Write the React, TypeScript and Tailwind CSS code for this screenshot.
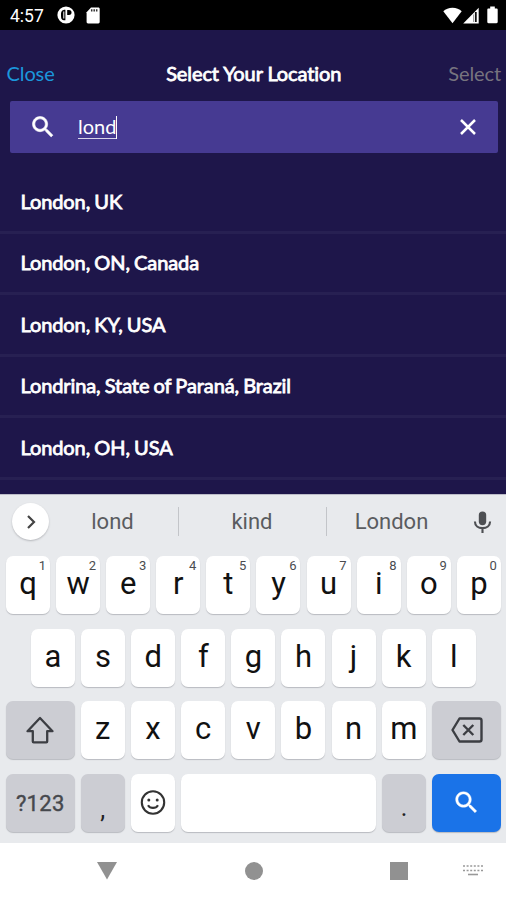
import { useState } from 'react'
import type { ReactNode } from 'react'
import clsx from 'clsx'

const LOCATIONS = [
  'London, UK',
  'London, ON, Canada',
  'London, KY, USA',
  'Londrina, State of Paraná, Brazil',
  'London, OH, USA',
]

const ROW_1 = ['q', 'w', 'e', 'r', 't', 'y', 'u', 'i', 'o', 'p']
const ROW_2 = ['a', 's', 'd', 'f', 'g', 'h', 'j', 'k', 'l']
const ROW_3 = ['z', 'x', 'c', 'v', 'b', 'n', 'm']

const SEARCH_PATH =
  'M15.5 14h-.79l-.28-.27C15.41 12.59 16 11.11 16 9.5 16 5.91 13.09 3 9.5 3S3 5.91 3 9.5 5.91 16 9.5 16c1.61 0 3.09-.59 4.23-1.57l.27.28v.79l5 4.99L20.49 19l-4.99-5zm-6 0C7.01 14 5 11.99 5 9.5S7.01 5 9.5 5 14 7.01 14 9.5 11.99 14 9.5 14z'

function StatusBar() {
  return (
    <div className="flex h-[30px] items-center bg-black pl-[10px] pr-[8px] text-white">
      <span className="w-[47px] pt-[3px] text-[17.5px] leading-none">4:57</span>
      <svg className="h-[18px] w-[18px]" viewBox="0 0 18 18">
        <circle cx="9" cy="9" r="8.6" fill="#fff" />
        <path d="M8.4 3.8v10.4H6.8C4.4 14.2 4 12 4 9s.5-5.200 4.400-5.200z" fill="#000" />
        <path d="M6.800 5.500v7" stroke="#fff" strokeWidth="1" />
        <path d="M10.2 4h1.700c2 0 2.600 1 2.600 2.500s-.7 2.400-2.600 2.400h-1.700z" fill="#000" />
      </svg>
      <svg className="ml-[11px] h-[17px] w-[14px]" viewBox="0 0 14 17">
        <path d="M5 .5h7.300c.8 0 1.400.6 1.400 1.400v13.200c0 .8-.6 1.400-1.400 1.400H2c-.8 0-1.400-.6-1.400-1.400V5.300z" fill="#fff" />
        <path d="M5.700 2.300v2.200M8.200 2.300v2.200M10.700 2.300v2.200" stroke="#333" strokeWidth="1.500" />
      </svg>
      <div className="ml-auto flex items-center">
        <svg className="h-[17px] w-[19px]" viewBox="0 0 19 17">
          <path d="M9.500 16.200.3 4.200C2.600 2 5.800.8 9.500.8s6.900 1.200 9.200 3.400z" fill="#fff" />
        </svg>
        <svg className="ml-[1px] h-[17px] w-[16px]" viewBox="0 0 16 17">
          <path d="M15.700.8v15.700H.2z" fill="#fff" />
          <path d="M12.800 5v10" stroke="#111" strokeWidth="1.800" />
          <path d="M10.500 7.500v7.500" stroke="#888" strokeWidth=".8" />
        </svg>
        <svg className="ml-[8px] h-[18px] w-[11px]" viewBox="0 0 11 18">
          <path d="M3.200.6h4.600v1.800h1.700c.7 0 1.200.5 1.200 1.200v12.500c0 .7-.5 1.200-1.200 1.200h-8C.8 17.300.3 16.800.3 16.100V3.600c0-.7.5-1.200 1.200-1.200h1.700z" fill="#fff" />
        </svg>
      </div>
    </div>
  )
}

function Header() {
  return (
    <div className="grid h-[71px] grid-cols-[1fr_auto_1fr] items-center pl-[6.500px] pr-[5px] pt-[14px] font-[Lato,sans-serif] text-[20px] leading-6">
      <button className="justify-self-start tracking-[-0.1px] text-[#1b97dc]">Close</button>
      <h1 className="text-[20px] font-normal tracking-[-0.1px] text-white [-webkit-text-stroke:0.8px_#fff]">
        Select Your Location
      </h1>
      <button className="justify-self-end tracking-[-0.1px] text-[#77747f]">Select</button>
    </div>
  )
}

function SearchBox({ query, onClear }: { query: string; onClear: () => void }) {
  return (
    <div className="ml-[10px] mr-[8px] flex h-[52px] items-center rounded-[2px] bg-[#463a92] pl-[19px] pr-[18px] font-[Lato,sans-serif] text-white">
      <svg className="h-[28px] w-[28px]" viewBox="0 0 24 24" fill="#fff" stroke="#fff" strokeWidth=".5">
        <path d={SEARCH_PATH} />
      </svg>
      <div className="ml-[21px] flex items-center">
        <span className="border-b border-[#d8d5ea] text-[20px] leading-[23px]">{query}</span>
        <span className="h-[23px] w-px bg-white" />
      </div>
      <button className="ml-auto" onClick={onClear}>
        <svg className="h-6 w-6" viewBox="0 0 24 24" stroke="#fff" strokeWidth="2.500">
          <path d="M5 5l14 14M19 5 5 19" />
        </svg>
      </button>
    </div>
  )
}

function Key({ className, hint, children }: { className?: string; hint?: number; children?: ReactNode }) {
  return (
    <button
      className={clsx(
        'relative flex h-[58px] items-center justify-center rounded-[7px] shadow-[0_1px_1px_#b9bbc0]',
        className ?? 'w-[44px] bg-white',
      )}
    >
      {hint !== undefined && (
        <span className="absolute right-[4px] top-[3px] text-[13px] leading-[14px] text-[#4a4c50]">{hint}</span>
      )}
      {children}
    </button>
  )
}

function Letter({ children }: { children: string }) {
  return <span className="-mt-[3px] text-[31px] leading-none text-[#111]">{children}</span>
}

function Suggestions() {
  return (
    <div className="flex h-[61px] items-center pb-[8px] text-[22px] text-[#5a5c60]">
      <button className="ml-[12px] flex h-[37px] w-[37px] items-center justify-center rounded-full bg-white shadow-[0_1px_2px_#b5b7bb]">
        <svg className="ml-[1px] h-[16px] w-[10px]" viewBox="0 0 10 16" fill="none" stroke="#444" strokeWidth="2.200">
          <path d="m2 2 6 6-6 6" />
        </svg>
      </button>
      <span className="w-[129px] pr-[2px] text-center">lond</span>
      <span className="h-[29px] w-px bg-[#c3c5c9]" />
      <span className="w-[147px] pr-px text-center">kind</span>
      <span className="h-[29px] w-px bg-[#c3c5c9]" />
      <span className="w-[129px] text-center">London</span>
      <svg className="ml-[16.500px] h-[24px] w-[19px]" viewBox="0 0 20 26" fill="none" stroke="#4d4f53">
        <rect x="6" y="1.500" width="8" height="15" rx="4" fill="#4d4f53" stroke="none" />
        <path d="M1.800 12.500c0 4.500 3.700 7.200 8.200 7.200s8.200-2.700 8.200-7.200M10 19.500V25" strokeWidth="2.300" />
      </svg>
    </div>
  )
}

function Keyboard() {
  return (
    <div className="h-[349px] border-t border-[#bcbcc8] bg-[#e8eaed]">
      <Suggestions />
      <div className="flex flex-col gap-[14.500px]">
        <div className="flex gap-[6.100px] pl-[6px]">
          {ROW_1.map((k, i) => (
            <Key key={k} hint={(i + 1) % 10}>
              <Letter>{k}</Letter>
            </Key>
          ))}
        </div>
        <div className="flex gap-[6.100px] pl-[31px]">
          {ROW_2.map((k) => (
            <Key key={k}>
              <Letter>{k}</Letter>
            </Key>
          ))}
        </div>
        <div className="flex gap-[6.200px] pl-[6px]">
          <Key className="w-[68.500px] bg-[#cccdd3]">
            <svg className="h-[28px] w-[30px]" viewBox="0 0 30 28" fill="none" stroke="#3c3e43" strokeWidth="2.300" strokeLinejoin="round">
              <path d="M15 2 2.500 15.200h5.300v10.300c0 .6.3.9.9.9h12.600c.6 0 .9-.3.9-.9V15.200h5.300z" />
            </svg>
          </Key>
          {ROW_3.map((k) => (
            <Key key={k}>
              <Letter>{k}</Letter>
            </Key>
          ))}
          <Key className="w-[69px] bg-[#cccdd3]">
            <svg className="h-[26px] w-[32px]" viewBox="0 0 32 26" fill="none" stroke="#3c3e43" strokeWidth="2.400" strokeLinejoin="round">
              <path d="M8.500 1.500h20c1.200 0 2 .8 2 2v19c0 1.200-.8 2-2 2h-20L1.500 13z" />
              <path d="m12.300 8 10 10m0-10-10 10" />
            </svg>
          </Key>
        </div>
        <div className="flex gap-[6.200px] pl-[6px]">
          <Key className="w-[68.500px] bg-[#cccdd3]">
            <span className="pt-[2px] text-[22px] tracking-[0.300px] text-[#46484d] [-webkit-text-stroke:0.4px_#46484d]">?123</span>
          </Key>
          <Key className="w-[44px] bg-[#cccdd3]">
            <span className="pt-[13px] text-[25px] leading-none text-[#222]">,</span>
          </Key>
          <Key>
            <svg className="h-[26px] w-[26px]" viewBox="0 0 26 26" fill="none" stroke="#333" strokeWidth="2.100">
              <circle cx="13" cy="12.500" r="11.200" />
              <path d="M8 15.200c2.200 3.600 7.800 3.600 10 0" />
              <circle cx="8.800" cy="10" r="1.500" fill="#333" stroke="none" />
              <circle cx="17.200" cy="10" r="1.500" fill="#333" stroke="none" />
            </svg>
          </Key>
          <Key className="w-[195px] bg-white" />
          <Key className="w-[43.500px] bg-[#cccdd3]">
            <span className="pt-[10px] text-[25px] leading-none text-[#222]">.</span>
          </Key>
          <Key className="w-[69px] bg-[#1a73e8]">
            <svg className="h-[29px] w-[29px]" viewBox="0 0 24 24" fill="#fff" stroke="#fff" strokeWidth=".3">
              <path d={SEARCH_PATH} />
            </svg>
          </Key>
        </div>
      </div>
    </div>
  )
}

function NavBar() {
  return (
    <div className="flex h-[57px] items-center bg-white pb-[2px]">
      <svg className="ml-[97px] h-[18px] w-[20px]" viewBox="0 0 20 18">
        <path d="M0 0h20L10 17.500z" fill="#919191" />
      </svg>
      <span className="ml-[128px] h-[18px] w-[18px] rounded-full bg-[#919191]" />
      <span className="ml-[127px] h-[18px] w-[18px] bg-[#919191]" />
      <svg className="ml-[54.500px] h-[13px] w-[20px]" viewBox="0 0 20 13" stroke="#999" strokeWidth="1.600">
        <path d="M0 2h20M0 6.500h20" strokeDasharray="2 1.600" />
        <path d="M5 10.500h10" />
      </svg>
    </div>
  )
}

export default function App() {
  const [query, setQuery] = useState('lond')

  return (
    <div className="flex h-[900px] w-[506px] flex-col overflow-hidden bg-[#1e164a] font-[Roboto,sans-serif]">
      <StatusBar />
      <Header />
      <SearchBox query={query} onClear={() => setQuery('')} />
      <ul className="h-[341px] overflow-hidden pt-[19px] font-[Lato,sans-serif] text-[20px] tracking-[-0.1px] text-white [-webkit-text-stroke:0.8px_#fff] [word-spacing:-0.8px]">
        {LOCATIONS.map((name) => (
          <li key={name} className="flex h-[61.500px] items-center border-b-[3px] border-[#272052] pb-px pl-[20.500px]">
            {name}
          </li>
        ))}
      </ul>
      <Keyboard />
      <NavBar />
    </div>
  )
}
